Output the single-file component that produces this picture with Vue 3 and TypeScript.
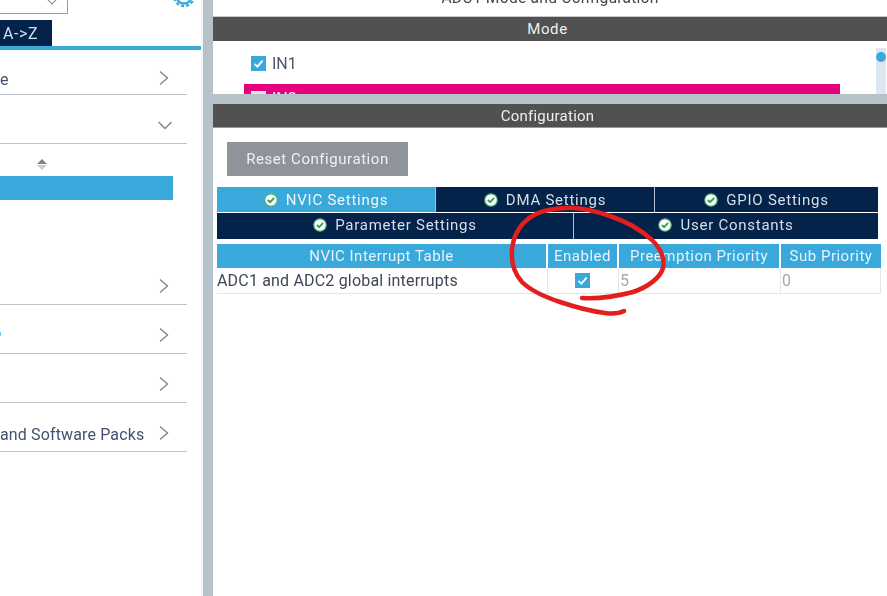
<script setup lang="ts">
interface Row { label: string; open?: boolean; h: number; tick?: boolean }
const topRows: Row[] = [
  { label: 'e', h: 45 },
  { label: '', open: true, h: 49 },
]
const bottomRows: Row[] = [
  { label: '', h: 48 },
  { label: '', h: 49, tick: true },
  { label: '', h: 49 },
  { label: 'and Software Packs', h: 49 },
]
const tabsOne = ['DMA Settings', 'GPIO Settings']
const tabsTwo = ['Parameter Settings', 'User Constants']
</script>

<template>
  <div class="app">
    <aside class="side">
      <div class="side-top">
        <div class="select"><span class="caret"></span></div>
        <svg class="gear" width="24" height="24" viewBox="0 0 24 24">
          <circle cx="12" cy="12" r="7.5" fill="none" stroke="#39a9dc" stroke-width="2.4" />
          <circle cx="12" cy="12" r="10" fill="none" stroke="#39a9dc" stroke-width="2.4" stroke-dasharray="3 2.2" />
          <circle cx="12" cy="12" r="3.5" fill="none" stroke="#39a9dc" stroke-width="1.6" />
        </svg>
      </div>
      <div class="sort-tabs"><span class="az">A-&gt;Z</span></div>
      <div class="tree">
        <div v-for="(r, i) in topRows" :key="i" class="row" :style="{ height: r.h + 'px' }">
          <span class="row-label">{{ r.label }}</span>
          <svg v-if="!r.open" class="chev" width="14" height="16" viewBox="0 0 14 16"><path d="M3 1.5 L10.5 8 L3 14.5" fill="none" stroke="#80858a" stroke-width="1.4" /></svg>
          <svg v-else class="chev-down" width="16" height="12" viewBox="0 0 16 12"><path d="M1.5 3 L8 9.5 L14.5 3" fill="none" stroke="#80858a" stroke-width="1.4" /></svg>
        </div>
        <div class="peripherals">
          <div class="sorter">
            <span class="up"></span>
            <span class="down"></span>
          </div>
          <div class="selected"></div>
        </div>
        <div v-for="(r, i) in bottomRows" :key="'b' + i" class="row" :style="{ height: r.h + 'px' }">
          <span class="row-label"><i v-if="r.tick" class="tick"></i>{{ r.label }}</span>
          <svg class="chev" width="14" height="16" viewBox="0 0 14 16"><path d="M3 1.5 L10.5 8 L3 14.5" fill="none" stroke="#80858a" stroke-width="1.4" /></svg>
        </div>
      </div>
    </aside>

    <main class="main">
      <div class="title"><span>ADC1 Mode and Configuration</span></div>
      <div class="bar mode-bar">Mode</div>
      <section class="mode-pane">
        <div class="mode-list">
          <label class="in-row">
            <span class="box">
              <svg width="15" height="15" viewBox="0 0 15 15"><path d="M3.5 7.8 L6.4 10.6 L11.6 4.6" fill="none" stroke="#fff" stroke-width="1.8" /></svg>
            </span>
            <span>IN1</span>
          </label>
          <div class="pink">
            <span class="box grey"></span>
            <span class="pink-text">IN2</span>
          </div>
        </div>
        <div class="scroll"><span class="thumb"></span></div>
      </section>
      <div class="split"></div>
      <div class="bar config-bar">Configuration</div>
      <section class="config">
        <button class="reset">Reset Configuration</button>
        <div class="tabs">
          <div class="tab-row r1">
            <div class="tab active">
              <svg class="ok" width="14" height="14" viewBox="0 0 14 14"><circle cx="7" cy="7" r="6.2" fill="#fff" stroke="#58b277" stroke-width="1.2" /><path d="M3.8 7 L6.1 9.2 L10.2 4.9" fill="none" stroke="#3f9e5a" stroke-width="2" /></svg>
              <span>NVIC Settings</span>
            </div>
            <div v-for="t in tabsOne" :key="t" class="tab">
              <svg class="ok" width="14" height="14" viewBox="0 0 14 14"><circle cx="7" cy="7" r="6.2" fill="#fff" stroke="#58b277" stroke-width="1.2" /><path d="M3.8 7 L6.1 9.2 L10.2 4.9" fill="none" stroke="#3f9e5a" stroke-width="2" /></svg>
              <span>{{ t }}</span>
            </div>
          </div>
          <div class="tab-row r2">
            <div v-for="t in tabsTwo" :key="t" class="tab">
              <svg class="ok" width="14" height="14" viewBox="0 0 14 14"><circle cx="7" cy="7" r="6.2" fill="#fff" stroke="#58b277" stroke-width="1.2" /><path d="M3.8 7 L6.1 9.2 L10.2 4.9" fill="none" stroke="#3f9e5a" stroke-width="2" /></svg>
              <span>{{ t }}</span>
            </div>
          </div>
        </div>
        <div class="table">
          <div class="th">NVIC Interrupt Table</div>
          <div class="th">Enabled</div>
          <div class="th">Preemption Priority</div>
          <div class="th">Sub Priority</div>
          <div class="td name">ADC1 and ADC2 global interrupts</div>
          <div class="td center">
            <span class="box">
              <svg width="15" height="15" viewBox="0 0 15 15"><path d="M3.5 7.8 L6.4 10.6 L11.6 4.6" fill="none" stroke="#fff" stroke-width="1.8" /></svg>
            </span>
          </div>
          <div class="td num">5</div>
          <div class="td num">0</div>
        </div>
      </section>
    </main>

    <svg class="scribble" width="887" height="596" viewBox="0 0 887 596">
      <path
        d="M582 298 C 600 299 618 296 633 292 C 648 287 660 278 663 268 C 665 258 660 248 652 240 C 640 229 625 221 610 216 C 595 211 580 207 565 208 C 550 209 538 211 528 219 C 518 227 513 238 512 250 C 511 262 514 273 522 282 C 531 291 545 297 560 302 C 575 307 590 311 605 313 C 612 314 620 313 624 311"
        fill="none" stroke="#e21f1d" stroke-width="4.5" stroke-linecap="round" stroke-linejoin="round"
      />
    </svg>
  </div>
</template>

<style>
html, body { margin: 0; padding: 0; background: #fff; overflow: hidden; }
</style>

<style scoped>
.app {
  position: relative;
  display: flex;
  width: 887px;
  height: 596px;
  overflow: hidden;
  background: #fff;
  font-family: Roboto, "Liberation Sans", sans-serif;
  font-size: 16px;
}
.side {
  width: 203px;
  flex: none;
  border-right: 10px solid #b6c2c9;
  box-shadow: inset -2px 0 0 #f1f3f5;
  filter: blur(0.35px);
}
.side-top {
  height: 20px;
  position: relative;
  display: flex;
  justify-content: space-between;
  overflow: hidden;
}
.select {
  width: 68px;
  height: 14px;
  border-right: 1px solid #9a9fa3;
  border-bottom: 1px solid #9a9fa3;
  display: flex;
  justify-content: flex-end;
  padding-right: 11px;
  box-sizing: border-box;
}
.caret {
  width: 7px;
  height: 7px;
  margin-top: -5px;
  border-right: 1.5px solid #85898d;
  border-bottom: 1.5px solid #85898d;
  transform: rotate(45deg);
}
.gear { margin: -16px 7px 0 0; }
.sort-tabs {
  height: 26px;
  border-bottom: 4px solid #39a9dc;
  margin-right: 2px;
}
.az {
  display: block;
  width: 52px;
  height: 26px;
  padding-left: 3px;
  box-sizing: border-box;
  background: #03234b;
  color: #d5dfe8;
  line-height: 27px;
  font-size: 16px;
  letter-spacing: 0.6px;
}
.tree { width: 187px; }
.row {
  display: flex;
  align-items: center;
  justify-content: space-between;
  box-sizing: border-box;
  padding-top: 13px;
  border-bottom: 1px solid #b9c3cb;
  color: #44516e;
  font-size: 16px;
  letter-spacing: 0.14px;
}
.row-label { white-space: nowrap; display: flex; align-items: center; margin-top: 2px; }
.tick { display: block; width: 1px; height: 4px; background: #7cc4ea; margin-top: -5px; }
.chev { margin: -2px 16px 0 0; }
.chev-down { margin: -2px 14px 0 0; }
.peripherals { height: 113px; }
.sorter {
  height: 32px;
  display: flex;
  flex-direction: column;
  align-items: center;
  padding: 15px 103px 0 0;
  box-sizing: border-box;
  width: 187px;
  gap: 1px;
}
.up { width: 0; height: 0; border: 5px solid transparent; border-top: 0; border-bottom: 5px solid #7f8488; }
.down { width: 0; height: 0; border: 5px solid transparent; border-bottom: 0; border-top: 5px solid #c9cdd0; }
.selected { width: 173px; height: 24px; background: #39a9dc; }
.main { flex: 1; min-width: 0; display: flex; flex-direction: column; filter: blur(0.35px); }
.title {
  height: 17px;
  flex: none;
  overflow: hidden;
  text-align: center;
  color: #44474d;
  font-size: 15.7px;
  letter-spacing: 0.2px;
  box-shadow: inset 0 -1px 0 #c8cbcd;
}
.title span { display: block; margin-top: -12px; line-height: 20px; }
.bar {
  flex: none;
  background: #505150;
  color: #eef0f0;
  text-align: center;
  font-size: 15px;
  letter-spacing: 0.6px;
  padding-right: 5px;
}
.mode-bar { height: 24px; line-height: 25px; }
.config-bar { height: 23px; line-height: 24px; border-bottom: 1px solid #999; letter-spacing: 0.25px; }
.mode-pane {
  height: 53px;
  flex: none;
  display: flex;
  overflow: hidden;
}
.mode-list { flex: 1; padding: 15px 36px 0 31px; }
.in-row {
  display: flex;
  align-items: center;
  gap: 6px;
  color: #4c566a;
  font-size: 16px;
  height: 15px;
  margin-left: 7px;
}
.box {
  width: 15px;
  height: 15px;
  flex: none;
  display: block;
  background: #39a9dc;
}
.box svg { display: block; }
.box.grey { background: #dfe2e5; }
.pink {
  height: 30px;
  margin-top: 13px;
  background: #e6007e;
  display: flex;
  align-items: flex-start;
  gap: 6px;
  padding: 7px 0 0 7px;
  color: #fff;
  line-height: 13px;
}
.pink-text { line-height: 15px; }
.scroll {
  width: 10px;
  margin: 7px 1px 0 0;
  background: #dbe8f4;
  display: flex;
  justify-content: center;
  flex: none;
}
.thumb { width: 10px; height: 10px; margin-top: 4px; border-radius: 50%; background: #39a9dc; }
.split { height: 10px; flex: none; background: #b6c2c9; }
.config { padding: 14px 5px 0 4px; flex: 1; }
.reset {
  display: block;
  margin-left: 10px;
  width: 181px;
  height: 34px;
  padding: 0;
  border: 0;
  background: #8e9499;
  color: #f0f1f2;
  font: 15px Roboto, "Liberation Sans", sans-serif;
  letter-spacing: 0.55px;
}
.tabs { margin-top: 11px; width: 661px; }
.tab-row { display: grid; }
.r1 { grid-template-columns: 219px 219px 223px; height: 25px; }
.r2 { grid-template-columns: 357px 304px; height: 26px; margin-top: 1px; }
.r2 .tab { padding-bottom: 2px; }
.tab {
  display: flex;
  align-items: center;
  justify-content: center;
  gap: 8px;
  background: #03234b;
  color: #d8dfe6;
  font-size: 15px;
  letter-spacing: 0.75px;
  box-sizing: border-box;
  border-right: 1px solid #b4bec6;
}
.tab:last-child { border-right: 0; }
.active { background: #39a9dc; color: #eef7fc; }
.table {
  display: grid;
  grid-template-columns: 331px 71px 162px 100px;
  margin-top: 5px;
  width: 664px;
  border-bottom: 1px solid #e3e6e8;
}
.th {
  height: 24px;
  line-height: 25px;
  background: #39a9dc;
  color: #e6f3fa;
  text-align: center;
  font-size: 15px;
  letter-spacing: 0.5px;
  box-sizing: border-box;
  border-right: 2px solid #fff;
}
.th:nth-child(4) { border-right: 0; }
.td {
  height: 25px;
  line-height: 25px;
  box-sizing: border-box;
  border-right: 1px solid #e3e6e8;
  font-size: 16px;
  color: #3f4658;
  letter-spacing: 0.18px;
  white-space: nowrap;
}
.center { display: flex; align-items: center; justify-content: center; padding-right: 2px; }
.num { color: #a3a9ae; padding-left: 1px; }
.scribble { position: absolute; left: 0; top: 0; pointer-events: none; }
</style>
